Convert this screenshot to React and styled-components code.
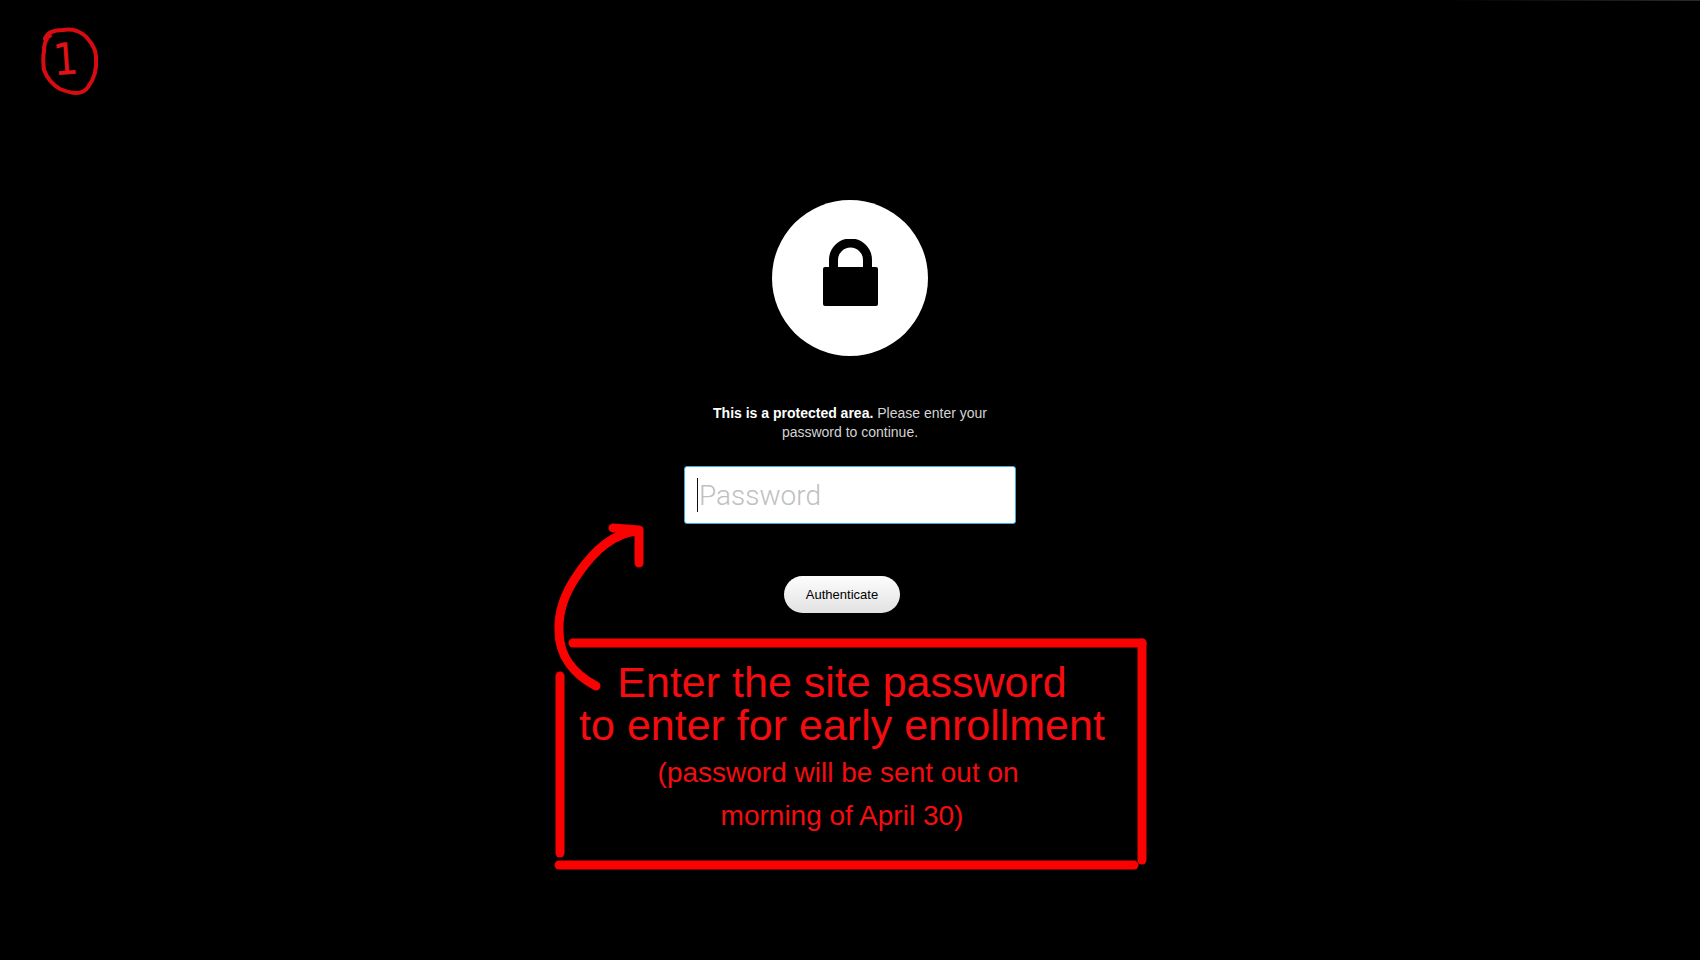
import React, { useState } from 'react';
import styled, { createGlobalStyle } from 'styled-components';

const App = () => {
    const [password, setPassword] = useState('');

    return (
        <>
            <GlobalStyle />
            <Page>
                <TopLine />
                <Header>
                    <Step>
                        <Ring viewBox="0 0 60 70" aria-hidden="true">
                            <path d="M5 12 L10 10 M5 13 C7 6 14 4 23 4 C30 3 34 4 37 5 C42 7 45 9 48 13 C53 19 56 25 56 31 C57 42 55 52 48 61 C45 66 41 67 36 67 C30 67 25 65 20 63 C13 59 7 52 4 44 C3 36 3 30 4 25 C4 20 5 15 8 11" />
                        </Ring>
                        <StepNumber>1</StepNumber>
                    </Step>
                </Header>
                <Main>
                    <LockCircle>
                        <svg width="56" height="68" viewBox="0 0 56 68" aria-hidden="true">
                            <path d="M11.5 34 V21 a17 17 0 0 1 34 0 V34" fill="none" stroke="#000" strokeWidth="9" />
                            <rect x="1" y="28" width="55" height="39" rx="2" />
                        </svg>
                    </LockCircle>
                    <Form onSubmit={ (e) => e.preventDefault() }>
                        <Message htmlFor="password">
                            <b>This is a protected area.</b> Please enter your
                            <br />
                            password to continue.
                        </Message>
                        <Field>
                            <Input
                                id="password"
                                type="password"
                                placeholder="Password"
                                value={ password }
                                onChange={ (e) => setPassword(e.target.value) }
                            />
                            {!password && <Caret />}
                        </Field>
                        <Button type="submit">Authenticate</Button>
                    </Form>
                    <Callout>
                        <Doodle viewBox="550 520 600 354" aria-hidden="true">
                            <path d="M573 644 H1142" />
                            <path d="M1142 644 V861" />
                            <path d="M560 677 V854" />
                            <path d="M559 866 H1134" />
                            <path d="M596 687 C573 675 559 656 559 632 C558 610 566 592 578 575 C593 553 612 535 636 532" />
                            <path d="M613 529 L639 531 L639 564" />
                        </Doodle>
                        <Big>Enter the site password<br />to enter for early enrollment</Big>
                        <Small>(password will be sent out on&nbsp;<br />morning of April 30)</Small>
                    </Callout>
                </Main>
            </Page>
        </>
    );
};

export default App;

const GlobalStyle = createGlobalStyle`
    * {
        box-sizing: border-box;
    }
    body {
        margin: 0;
        background: #000;
        font-family: "Liberation Sans", Arial, sans-serif;
    }
`;

const Page = styled.div`
    min-height: 100vh;
    background: #000;
    display: flex;
    flex-direction: column;
    overflow: hidden;
`;

const TopLine = styled.div`
    height: 1px;
    background: linear-gradient(to right, #000 85%, #2a2a2a);
`;

const Header = styled.header`
    height: 199px;
    padding: 25px 40px;
`;

const Step = styled.div`
    position: relative;
    width: 60px;
    height: 70px;
    display: flex;
    align-items: center;
    justify-content: center;
`;

const Ring = styled.svg`
    position: absolute;
    top: 0;
    left: 0;
    width: 100%;
    height: 100%;
    fill: none;
    stroke: #d80c10;
    stroke-width: 4;
    stroke-linecap: round;
`;

const StepNumber = styled.span`
    color: #e01216;
    font-family: "DejaVu Sans Condensed", "DejaVu Sans", sans-serif;
    font-size: 44px;
    line-height: 64px;
    padding: 0 8px 4px 0;
    transform: rotate(-4deg);
`;

const Main = styled.main`
    display: flex;
    flex-direction: column;
    align-items: center;
`;

const LockCircle = styled.div`
    width: 156px;
    height: 156px;
    border-radius: 50%;
    background: #fff;
    display: flex;
    justify-content: center;
    padding-top: 39px;
`;

const Form = styled.form`
    width: 332px;
    max-width: 100%;
    margin-top: 48px;
    display: flex;
    flex-direction: column;
    align-items: center;
`;

const Message = styled.label`
    color: #d4d4d4;
    font-size: 14px;
    line-height: 19px;
    text-align: center;
    b {
        color: #fff;
    }
`;

const Field = styled.div`
    position: relative;
    width: 100%;
    margin-top: 24px;
`;

const Input = styled.input`
    display: block;
    width: 100%;
    height: 58px;
    padding: 0 14px;
    border: 1px solid #3fa9e0;
    border-radius: 3px;
    background: #fff;
    color: #222;
    font-family: Roboto, "Liberation Sans", sans-serif;
    font-size: 28px;
    font-weight: 300;
    outline: none;
    &::placeholder {
        color: #c0c0c0;
        opacity: 1;
    }
`;

const Caret = styled.span`
    position: absolute;
    left: 13px;
    top: 12px;
    width: 1px;
    height: 34px;
    background: #111;
`;

const Button = styled.button`
    height: 37px;
    margin-top: 52px;
    margin-right: 16px;
    padding: 0 22px;
    border: none;
    border-radius: 19px;
    background: linear-gradient(#fdfdfd, #e2e2e2);
    color: #000;
    font-family: inherit;
    font-size: 13px;
    cursor: pointer;
`;

const Callout = styled.section`
    position: relative;
    width: 600px;
    max-width: 100%;
    margin-top: 26px;
    padding: 22px 16px 36px 0;
    color: #f50c10;
    text-align: center;
`;

const Doodle = styled.svg`
    position: absolute;
    left: 0;
    bottom: 0;
    width: 100%;
    fill: none;
    stroke: #fb0202;
    stroke-width: 9;
    stroke-linecap: round;
    stroke-linejoin: round;
    pointer-events: none;
`;

const Big = styled.p`
    margin: 0;
    font-size: 43px;
    line-height: 43px;
`;

const Small = styled.p`
    margin: 4px 0 0;
    font-size: 28px;
    line-height: 43px;
`;
